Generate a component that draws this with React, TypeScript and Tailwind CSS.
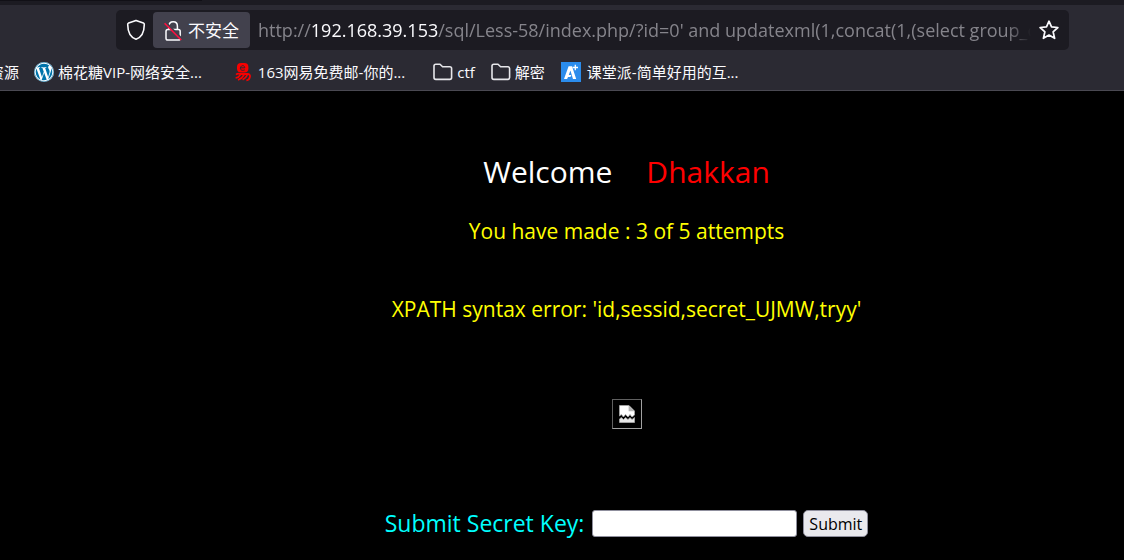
import { FaWordpress } from "react-icons/fa";

function ShieldIcon() {
  return (
    <svg viewBox="0 0 20 22" className="h-[22px] w-5" fill="none" stroke="#fbfbfe" strokeWidth="1.6" strokeLinejoin="round" aria-hidden="true">
      <path d="M10 1.4 L17.4 4 Q18.4 4.4 18.3 5.6 C18.2 13 15.4 18.6 10 20.3 C4.6 18.6 1.8 13 1.7 5.6 Q1.6 4.4 2.6 4 Z" />
    </svg>
  );
}

function InsecureLockIcon() {
  return (
    <svg viewBox="0 0 20 22" className="h-[22px] w-5" fill="none" aria-hidden="true">
      <path d="M6 9.5 V6 C6 0.2 14.4 0.2 14.4 6 V9.5" stroke="#fbfbfe" strokeWidth="1.5" />
      <rect x="3" y="9.6" width="14.2" height="10.4" rx="1.8" stroke="#fbfbfe" strokeWidth="1.5" />
      <path d="M3.2 3 L19 19" stroke="#42414d" strokeWidth="2.2" />
      <path d="M1.6 3.2 L18.2 20" stroke="#ff0f3f" strokeWidth="1.6" />
    </svg>
  );
}

function StarIcon() {
  return (
    <svg viewBox="0 0 20 20" className="size-5" fill="none" stroke="#fbfbfe" strokeWidth="1.7" strokeLinejoin="round" aria-hidden="true">
      <path d="M10 1.2 L12.5 6.9 L18.9 7.5 L14.1 11.8 L15.6 18.3 L10 15 L4.4 18.3 L5.9 11.8 L1.1 7.5 L7.5 6.9 Z" />
    </svg>
  );
}

function FolderIcon() {
  return (
    <svg viewBox="0 0 20 18" className="h-[18px] w-5" fill="none" stroke="#e6e6ea" strokeWidth="1.6" strokeLinejoin="round" aria-hidden="true">
      <path d="M1 3 Q1 1.2 2.8 1.2 H7 L9.6 3.8 H16.8 Q18.6 3.8 18.6 5.6 V14.6 Q18.6 16.4 16.8 16.4 H2.8 Q1 16.4 1 14.6 Z" />
    </svg>
  );
}

function WordpressIcon() {
  return (
    <span className="flex size-5 items-center justify-center rounded-full bg-white">
      <FaWordpress className="size-5 text-[#0073aa]" aria-hidden="true" />
    </span>
  );
}

function NeteaseIcon() {
  return (
    <svg viewBox="0 0 18 20" className="h-5 w-[18px]" fill="none" aria-hidden="true">
      <rect x="3" y="1" width="11.4" height="9.6" rx="4" fill="#f80000" />
      <path d="M6.4 5.8 H10.8 C10.8 2.8 6.4 3 6.4 6.2 C6.4 8.8 9.4 8.6 10.8 7.8" stroke="#2b2a33" strokeWidth="1" />
      <path d="M2 12.6 Q4 11 6 12 H13.6 Q16.4 12.2 16 14.6 Q15.4 18 12.4 18.4" stroke="#f80000" strokeWidth="1.8" />
      <path d="M6.4 12.6 Q5 15.4 1.6 16 M10 12.8 Q8 16.6 4 18 M13.2 13 Q12 16 8.6 17.8" stroke="#f80000" strokeWidth="1.7" />
    </svg>
  );
}

function KetangIcon() {
  return (
    <svg viewBox="0 0 20 20" className="size-5" aria-hidden="true">
      <rect width="20" height="20" fill="#2b8cec" />
      <path d="M3 17 L7.6 4.2 H11 L15.2 17 H12 L9.4 8.6 L7.8 13 H10.4 L9.4 15 H7 L6.1 17 Z" fill="#fff" />
      <path d="M14.3 2.8 V8.2 M11.6 5.5 H17" stroke="#fff" strokeWidth="1.3" />
    </svg>
  );
}

const bookmark = "flex shrink-0 items-center whitespace-nowrap";

export default function App() {
  return (
    <div className="min-h-screen overflow-x-hidden bg-black font-['Open_Sans','Noto_Sans_CJK_SC',sans-serif]">
      <header className="border-b border-[#4a4952] bg-[#2b2a33] text-[#fbfbfe]">
        <div className="h-[5px] bg-[#1c1b22]">
          <div className="h-px w-[202px] bg-[#111016]" />
        </div>
        <div className="pt-[5px] pr-[55px] pl-[116px]">
          <div className="flex h-10 items-center rounded-[5px] bg-[#1c1b22] pr-2.5">
            <button type="button" aria-label="跟踪保护" className="flex w-[37px] shrink-0 items-center justify-center pl-[3px]">
              <ShieldIcon />
            </button>
            <button type="button" className="flex h-9 w-[97px] shrink-0 items-center gap-[5px] rounded bg-[#42414d] pt-px pl-2.5 text-[17px] whitespace-nowrap">
              <InsecureLockIcon />
              不安全
            </button>
            <div
              role="textbox"
              aria-label="地址"
              tabIndex={0}
              className="ml-2 min-w-0 flex-1 overflow-hidden [mask-image:linear-gradient(to_left,transparent,black_24px)] text-[18px] leading-7 whitespace-nowrap text-[#85848b]"
            >
              http://<span className="text-[#fbfbfe]">192.168.39.153</span>/sql/Less-58/index.php/?id=0' and updatexml(1,concat(1,(select group_c
            </div>
            <button type="button" aria-label="添加书签" className="ml-2 shrink-0">
              <StarIcon />
            </button>
          </div>
        </div>
        <nav aria-label="书签" className="flex h-10 items-center overflow-hidden pt-1 text-[15px] leading-5">
          <a href="#resources" className={bookmark + " -ml-[11px]"}>资源</a>
          <a href="#wordpress" className={bookmark + " ml-[15px] gap-1"}>
            <WordpressIcon />
            棉花糖VIP-网络安全...
          </a>
          <a href="#mail" className={bookmark + " ml-8 gap-1.5"}>
            <NeteaseIcon />
            163网易免费邮-你的...
          </a>
          <a href="#ctf" className={bookmark + " ml-7 gap-1"}>
            <FolderIcon />
            ctf
          </a>
          <a href="#decrypt" className={bookmark + " ml-4 gap-1"}>
            <FolderIcon />
            解密
          </a>
          <a href="#ketang" className={bookmark + " ml-4 gap-1.5"}>
            <KetangIcon />
            课堂派-简单好用的互...
          </a>
        </nav>
      </header>

      <main className="flex flex-col items-center pt-[60px] pl-[129px] text-center">
        <h1 className="flex gap-[34px] text-[30px] leading-[42px] text-white">
          <span>Welcome</span>
          <span className="text-[#ff0000]">Dhakkan</span>
        </h1>
        <p className="mt-6 text-[21px] leading-7 text-[#ffff00]">You have made : 3 of 5 attempts</p>
        <p className="mt-[50px] text-[21px] leading-7 text-[#ffff00]">XPATH syntax error: 'id,sessid,secret_UJMW,tryy'</p>
        <div role="img" aria-label="broken image" className="mt-[76px] flex size-[30px] items-center justify-center border border-[#a0a0a0] border-t-[#606060] border-l-[#606060]">
          <svg viewBox="0 0 16 18" className="h-[18px] w-4" aria-hidden="true">
            <path d="M0.5 0.5 H10 L15.5 6 V10 L13 12 L11 9.6 L9 12 L6.6 9.6 L4.4 12 L2.4 9.6 L0.5 11 Z" fill="#fff" stroke="#aaa" strokeWidth="0.8" />
            <path d="M9.6 0.5 L15.5 6.2 H9.6 Z" fill="#b4b4b4" />
            <path d="M0.5 14 L2.4 12.6 L4.4 14.6 L6.6 12.6 L9 14.6 L11 12.6 L13 14.6 L15.5 12.6 V17.5 H0.5 Z" fill="#e8e8e8" stroke="#aaa" strokeWidth="0.8" />
          </svg>
        </div>
        <form className="mt-[78px] flex items-center" onSubmit={(e) => e.preventDefault()}>
          <label htmlFor="key" className="mr-2 text-[23px] leading-8 text-[#00ffff]">Submit Secret Key:</label>
          <input id="key" type="text" className="mr-1.5 h-[27px] w-[205px] rounded-[3px] border border-[#8f8f9d] bg-white px-1 text-black" />
          <button type="submit" className="h-[27px] rounded-[5px] border border-[#8f8f9d] bg-[#e9e9ed] px-[5px] pt-px text-[16px] leading-6 text-black">
            Submit
          </button>
        </form>
      </main>
    </div>
  );
}
